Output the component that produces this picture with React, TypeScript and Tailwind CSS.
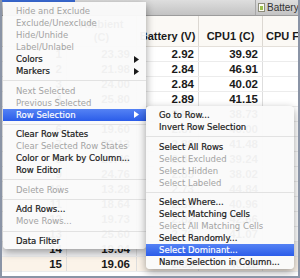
import React from "react";

type MenuEntry =
  | { sep: true }
  | { label: string; off?: boolean; active?: boolean; arrow?: boolean };

const rows: [number, string, string, string][] = [
  [1, "23.39", "2.92", "39.92"],
  [2, "21.98", "2.84", "46.91"],
  [3, "24.00", "2.84", "40.02"],
  [4, "25.80", "2.89", "41.15"],
  [5, "25.80", "2.87", "38.73"],
  [6, "19.60", "2.87", "40.00"],
  [7, "22.13", "2.88", "41.48"],
  [8, "20.46", "2.86", "39.24"],
  [9, "24.76", "2.85", "38.02"],
  [10, "13.28", "2.73", "44.84"],
  [11, "18.64", "2.80", "40.96"],
  [12, "19.73", "2.82", "42.66"],
  [13, "25.60", "2.79", "41.07"],
  [14, "19.04", "2.81", "39.55"],
  [15, "19.06", "2.83", "40.12"],
];

const mainMenu: MenuEntry[] = [
  { label: "Hide and Exclude", off: true },
  { label: "Exclude/Unexclude", off: true },
  { label: "Hide/Unhide", off: true },
  { label: "Label/Unlabel", off: true },
  { label: "Colors", arrow: true },
  { label: "Markers", arrow: true },
  { sep: true },
  { label: "Next Selected", off: true },
  { label: "Previous Selected", off: true },
  { label: "Row Selection", arrow: true, active: true },
  { sep: true },
  { label: "Clear Row States" },
  { label: "Clear Selected Row States", off: true },
  { label: "Color or Mark by Column..." },
  { label: "Row Editor" },
  { sep: true },
  { label: "Delete Rows", off: true },
  { sep: true },
  { label: "Add Rows..." },
  { label: "Move Rows...", off: true },
  { sep: true },
  { label: "Data Filter" },
];

const subMenu: MenuEntry[] = [
  { label: "Go to Row..." },
  { label: "Invert Row Selection" },
  { sep: true },
  { label: "Select All Rows" },
  { label: "Select Excluded", off: true },
  { label: "Select Hidden", off: true },
  { label: "Select Labeled", off: true },
  { sep: true },
  { label: "Select Where..." },
  { label: "Select Matching Cells" },
  { label: "Select All Matching Cells", off: true },
  { label: "Select Randomly..." },
  { label: "Select Dominant...", active: true },
  { label: "Name Selection in Column..." },
];

function Arrow({ white }: { white?: boolean }) {
  return (
    <svg width="5" height="7" viewBox="0 0 5 7" className="shrink-0">
      <polygon points="0,0 5,3.5 0,7" fill={white ? "#ffffff" : "#1a1a1a"} />
    </svg>
  );
}

function Menu({ items }: { items: MenuEntry[] }) {
  return (
    <>
      {items.map((it, i) => {
        if ("sep" in it) {
          return (
            <div key={i} className="h-[7.6px] flex items-center">
              <div className="h-px w-full bg-[#e2e2e2]" />
            </div>
          );
        }
        return (
          <div
            key={i}
            className={`h-[12px] flex items-center justify-between pl-[13px] pr-[7px] font-['DejaVu_Sans',sans-serif] text-[8.5px] leading-[12px] whitespace-nowrap ${
              it.active
                ? "bg-gradient-to-b from-[#5582f4] to-[#2b5ce9] text-white [-webkit-text-stroke:0.15px_#ffffff]"
                : it.off
                ? "text-[#a3a3a3]"
                : "text-[#1a1a1a] [-webkit-text-stroke:0.2px_#1a1a1a]"
            }`}
          >
            <span>{it.label}</span>
            {it.arrow && <Arrow white={it.active} />}
          </div>
        );
      })}
    </>
  );
}

export default function App() {
  return (
    <div className="relative w-[300px] h-[278px] overflow-hidden bg-white font-['Liberation_Sans',Arial,sans-serif] border-l-2 border-r-2 border-b-2 border-[#8a94a6]">
      {/* window bar */}
      <div className="flex h-[16px] bg-gradient-to-b from-[#dedede] to-[#c3c3c3] border-b border-[#9c9c9c]">
        <div className="h-[2px] w-[73px] bg-[#3a6bd6]" />
        <div className="flex-1" />
        <div className="w-[43px] flex items-center gap-[2px] border-l border-[#a8a8a8] pl-[2px] overflow-hidden">
          <svg width="7" height="9" viewBox="0 0 7 9" className="shrink-0">
            <rect x="0.5" y="0.5" width="6" height="8" fill="#fdfdf2" stroke="#8c8c7a" />
            <rect x="2" y="3" width="3" height="4" fill="#9ac04a" />
          </svg>
          <span className="text-[10px] text-[#333] whitespace-nowrap">Battery &amp;</span>
        </div>
      </div>

      {/* column headers */}
      <div className="flex h-[31px] bg-[#fbf9f5] border-b border-[#e4e0da] text-[11px] font-bold text-[#1a1a1a]">
        <div className="w-[65px] border-r border-[#dcd8d2]" />
        <div className="w-[70px] border-r border-[#dcd8d2] flex flex-col items-center justify-end pb-[2px] leading-[13px]">
          <span>Ambient</span>
          <span>(C)</span>
        </div>
        <div className="w-[62px] border-r border-[#dcd8d2] flex items-end justify-center pb-[2px] whitespace-nowrap">
          Battery (V)
        </div>
        <div className="w-[64px] border-r border-[#dcd8d2] flex items-end justify-center pb-[2px] whitespace-nowrap">
          CPU1 (C)
        </div>
        <div className="flex-1 overflow-hidden flex items-end pl-[3px] pb-[2px] whitespace-nowrap">
          CPU F
        </div>
      </div>

      {/* data rows */}
      {rows.map(([n, amb, bat, cpu]) => (
        <div
          key={n}
          className={`flex h-[15px] leading-[15px] text-[11.5px] font-bold text-[#1a1a1a] border-b border-[#ececec] ${
            n === 15 ? "bg-[#fbf3e9]" : n === 14 ? "bg-[#f3f3f5]" : "bg-white"
          }`}
        >
          <div className="w-[65px] border-r border-[#dedede] text-right pr-[4px]">{n}</div>
          <div className="w-[70px] border-r border-[#dedede] text-right pr-[6px]">{amb}</div>
          <div className="w-[62px] border-r border-[#dedede] text-right pr-[4px]">{bat}</div>
          <div className="w-[64px] border-r border-[#dedede] text-right pr-[4px]">{cpu}</div>
          <div className="flex-1" />
        </div>
      ))}

      {/* context menu */}
      <div className="absolute left-[1px] top-[2px] w-[143px] pt-[3px] pb-[2px] bg-[rgba(250,250,250,0.955)] rounded-b-[4px] shadow-[0_3px_9px_rgba(0,0,0,0.38)]">
        <Menu items={mainMenu} />
      </div>

      {/* row selection submenu */}
      <div className="absolute left-[144px] top-[106px] w-[148px] pt-[3px] pb-[1px] bg-[rgba(250,250,250,0.955)] rounded-[4px] shadow-[0_3px_9px_rgba(0,0,0,0.38)]">
        <Menu items={subMenu} />
      </div>
    </div>
  );
}
